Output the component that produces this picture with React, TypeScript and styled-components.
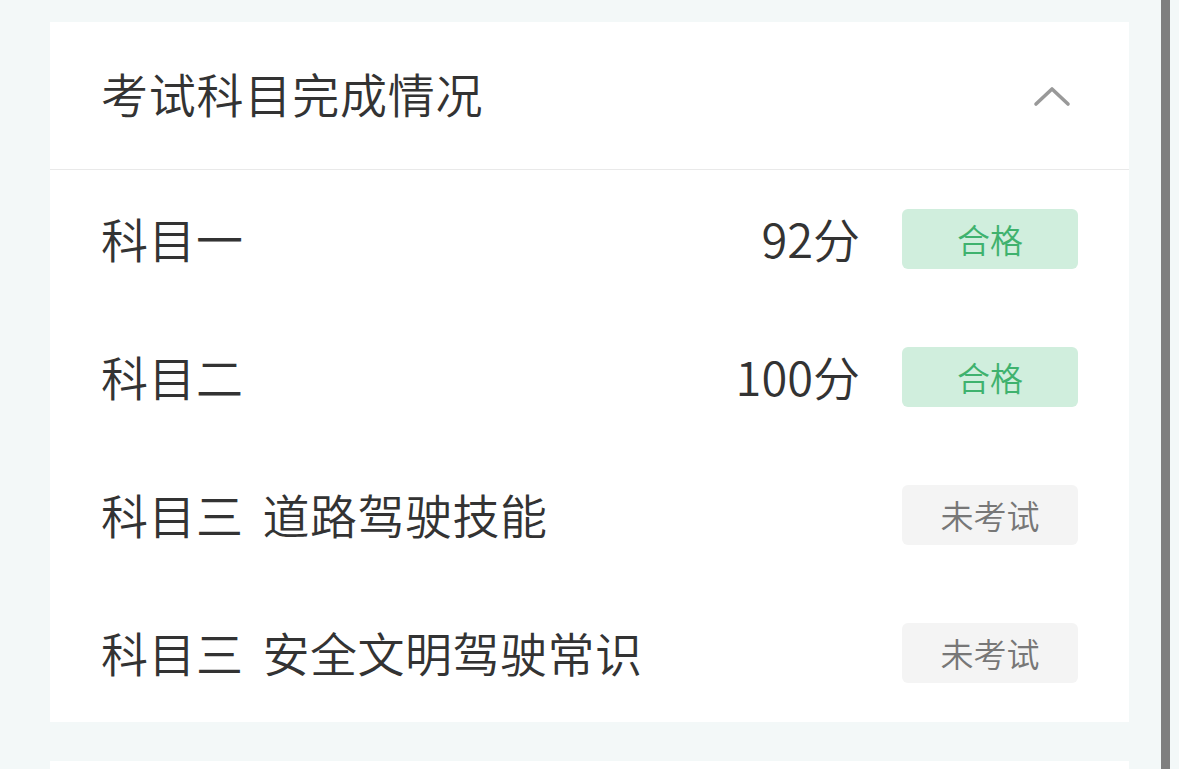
import React from "react";
import styled, { createGlobalStyle } from "styled-components";

const GlobalStyle = createGlobalStyle`
  html, body {
    margin: 0;
    padding: 0;
    background: #f3f8f8;
    font-family: "Noto Sans CJK SC", "Noto Sans", sans-serif;
    overflow: hidden;
  }
`;

// PAGE START
const Page = styled("div")`
  display: flex;
  width: 1179px;
  height: 769px;
  overflow: hidden;
`;

const Content = styled("div")`
  flex: 1;
  display: flex;
  flex-direction: column;
  gap: 39px;
  padding: 22px 32px 0 50px;
`;

const ScrollTrack = styled("div")`
  width: 9px;
  margin-right: 9px;
  background: #7f7f7f;
`;
// PAGE END

// CARD START
const Card = styled("div")<{ $height?: number }>`
  background: #fff;
  flex-shrink: 0;
  ${p => (p.$height ? `height: ${p.$height}px;` : "")}
`;

const CardHeader = styled("div")`
  height: 148px;
  box-sizing: border-box;
  display: flex;
  align-items: center;
  justify-content: space-between;
  padding: 0 56px 6px 51px;
  border-bottom: 1px solid #e9e9e9;
`;

const Title = styled("div")`
  font-size: 47px;
  font-weight: 350;
  letter-spacing: 0.8px;
  color: #333;
  line-height: 1;
`;

const ChevronBox = styled("div")`
  display: flex;
  margin-top: 6px;
`;

const Row = styled("div")`
  height: 138px;
  box-sizing: border-box;
  display: flex;
  align-items: center;
  padding: 0 51px;
  font-size: 47px;
  font-weight: 350;
  color: #333;
`;

const Name = styled("div")`
  flex: 1;
  line-height: 1;
  white-space: pre;
  letter-spacing: 0.5px;
  word-spacing: 8px;
  margin-bottom: 3px;
`;

const Score = styled("div")`
  line-height: 1;
  margin: 0 42px 3px 0;
`;

const Badge = styled("div")<{ $pass: boolean }>`
  width: 176px;
  height: 60px;
  border-radius: 6px;
  display: flex;
  align-items: center;
  justify-content: center;
  font-size: 33px;
  font-weight: 350;
  background: ${p => (p.$pass ? "#d0eedd" : "#f4f4f4")};
  color: ${p => (p.$pass ? "#3fb26e" : "#777")};
`;
// CARD END

const Chevron = () => (
  <svg width="40" height="24" viewBox="0 0 40 24">
    <path
      d="M3 20 L19 5 L35 20"
      fill="none"
      stroke="#999"
      strokeWidth="3.6"
      strokeLinecap="round"
      strokeLinejoin="round"
    />
  </svg>
);

const subjects = [
  { name: "科目一", score: "92分", pass: true },
  { name: "科目二", score: "100分", pass: true },
  { name: "科目三 道路驾驶技能", score: "", pass: false },
  { name: "科目三 安全文明驾驶常识", score: "", pass: false },
];

export default function App() {
  return (
    <Page>
      <GlobalStyle />
      <Content>
        <Card>
          <CardHeader>
            <Title>考试科目完成情况</Title>
            <ChevronBox>
              <Chevron />
            </ChevronBox>
          </CardHeader>
          {subjects.map(s => (
            <Row key={s.name}>
              <Name>{s.name}</Name>
              {s.score && <Score>{s.score}</Score>}
              <Badge $pass={s.pass}>{s.pass ? "合格" : "未考试"}</Badge>
            </Row>
          ))}
        </Card>
        <Card $height={200} />
      </Content>
      <ScrollTrack />
    </Page>
  );
}
